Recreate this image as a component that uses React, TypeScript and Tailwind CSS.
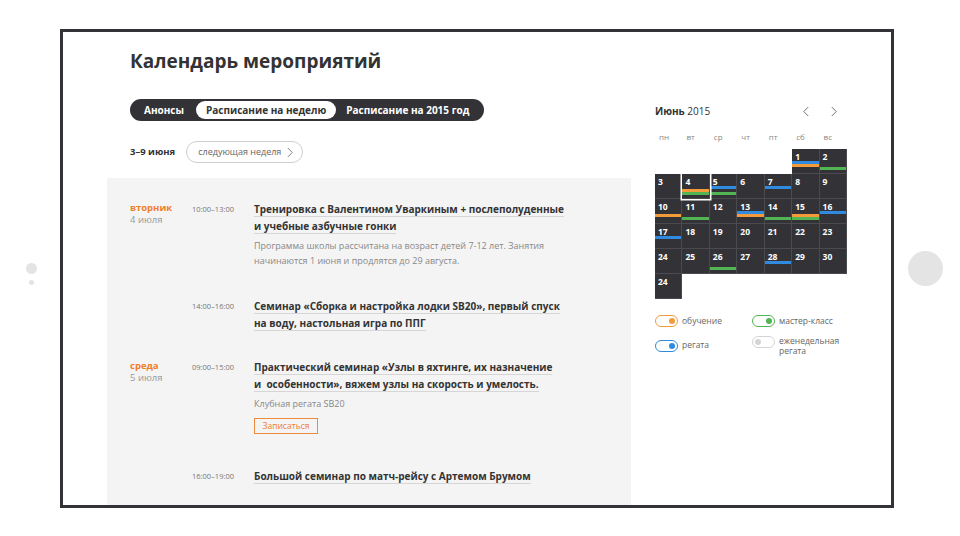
import React from "react";

type Bar = "b" | "o" | "g";
const BARS: Record<number, Bar[]> = {
  1: ["b", "o"],
  2: ["g"],
  4: ["o", "g"],
  5: ["b", "g"],
  7: ["b"],
  10: ["o"],
  11: ["g"],
  13: ["b", "o"],
  14: ["g"],
  15: ["o", "g"],
  16: ["b"],
  17: ["b"],
  26: ["g"],
  28: ["b"],
};

const cells: (number | null)[] = [
  null, null, null, null, null, 1, 2,
  3, 4, 5, 6, 7, 8, 9,
  10, 11, 12, 13, 14, 15, 16,
  17, 18, 19, 20, 21, 22, 23,
  24, 25, 26, 27, 28, 29, 30,
  -24,
];

function Cell({ n }: { n: number | null }) {
  if (n === null) return <div className="h-[25px]" />;
  const num = Math.abs(n);
  const bars = n > 0 ? BARS[num] || [] : [];
  const today = n === 4;
  return (
    <div
      className={
        "h-[25px] flex flex-col bg-[#333337] border-r border-b border-[#4b4b4f] " +
        (today ? "relative z-10 shadow-[0_0_0_1.5px_#ffffff]" : "")
      }
    >
      <span className="pl-[3px] pt-[3px] text-[8.5px] leading-[9px] font-bold text-white">{num}</span>
      <div className="mt-auto mb-[3px] flex flex-col">
        <div className={"h-[3px] " + (bars.includes("b") ? "bg-[#2f8be0]" : "")} />
        <div className={"h-[3px] " + (bars.includes("o") ? "bg-[#f39a3a]" : "")} />
        <div className={"h-[3px] " + (bars.includes("g") ? "bg-[#53b453]" : "")} />
      </div>
    </div>
  );
}

function Toggle({ border, dot, on }: { border: string; dot: string; on: boolean }) {
  return (
    <div
      className={
        "w-[23px] h-[12px] rounded-full border-[1.5px] flex items-center px-[2px] shrink-0 " +
        (on ? "justify-end " : "justify-start ") +
        border
      }
    >
      <div className={"w-[6px] h-[6px] rounded-full " + dot} />
    </div>
  );
}

function Title({ children }: { children: React.ReactNode }) {
  return (
    <div className="text-[10px] leading-[17px] font-bold text-[#333333]">
      <span className="border-b border-[#d6d6d6]">{children}</span>
    </div>
  );
}

function Chevron({ dir, cls }: { dir: "l" | "r"; cls: string }) {
  return (
    <svg viewBox="0 0 8 14" className={cls} fill="none" stroke="currentColor" strokeWidth="1.1">
      {dir === "l" ? <polyline points="7,1 1,7 7,13" /> : <polyline points="1,1 7,7 1,13" />}
    </svg>
  );
}

function Day({ name, date }: { name: string; date: string }) {
  return (
    <div className="w-[62px] pt-[1px]">
      <div className="text-[9.5px] leading-[12px] font-bold text-[#f07e2c]">{name}</div>
      <div className="text-[9.5px] leading-[12px] text-[#999999]">{date}</div>
    </div>
  );
}

export default function App() {
  const font = "font-['Open_Sans','Noto_Sans',sans-serif]";
  return (
    <div className={"relative w-[960px] h-[536px] bg-white flex " + font}>
      {/* side slider dots */}
      <div className="absolute left-[25.5px] top-[262.5px] w-[11px] h-[11px] rounded-full bg-[#e4e4e4]" />
      <div className="absolute left-[28.5px] top-[279.5px] w-[5px] h-[5px] rounded-full bg-[#e4e4e4]" />
      <div className="absolute left-[907.5px] top-[250.5px] w-[35px] h-[35px] rounded-full bg-[#e4e4e4]" />

      <div className="ml-[60px] mt-[29px] w-[834px] h-[479px] border-[3px] border-[#333337] flex overflow-hidden">
        {/* left column */}
        <div className="ml-[44px] w-[524px] flex flex-col">
          <div className="pl-[23px] pt-[16px]">
            <h1 className="text-[19px] leading-[26px] font-bold text-[#333333]">Календарь мероприятий</h1>
            <div className="mt-[25px] inline-flex items-center h-[22px] p-[2px] rounded-full bg-[#333337] text-[10px] font-bold">
              <span className="pl-[12px] pr-[12px] text-white">Анонсы</span>
              <span className="h-[18px] flex items-center px-[10px] rounded-full bg-white text-[#333333]">
                Расписание на неделю
              </span>
              <span className="pl-[10px] pr-[13px] text-white">Расписание на 2015 год</span>
            </div>
            <div className="mt-[20px] flex items-center h-[22px]">
              <span className="text-[9.5px] font-bold text-[#333333]">3–9 июня</span>
              <div className="ml-[11px] h-[22px] w-[117px] rounded-full border border-[#cfcfcf] flex items-center pl-[11px] text-[9px] text-[#666666]">
                следующая неделя
                <Chevron dir="r" cls="ml-[6px] w-[6px] h-[11px] text-[#666666]" />
              </div>
            </div>
          </div>

          <div className="mt-[15px] flex-1 bg-[#f4f4f4] pl-[23px] pt-[23px]">
            {/* event 1 */}
            <div className="flex">
              <Day name="вторник" date="4 июля" />
              <div className="w-[62px] text-[7.5px] leading-[17px] text-[#777777]">10:00–13:00</div>
              <div className="w-[340px]">
                <Title>
                  Тренировка с Валентином Уваркиным + послеполуденные
                  <br />и учебные азбучные гонки
                </Title>
                <div className="mt-[3px] text-[9px] leading-[15px] text-[#888888]">
                  Программа школы рассчитана на возраст детей 7-12 лет. Занятия
                  <br />
                  начинаются 1 июня и продлятся до 29 августа.
                </div>
              </div>
            </div>
            {/* event 2 */}
            <div className="flex mt-[30px]">
              <div className="w-[62px]" />
              <div className="w-[62px] text-[7.5px] leading-[17px] text-[#777777]">14:00–16:00</div>
              <div className="w-[340px]">
                <Title>
                  Семинар «Сборка и настройка лодки SB20», первый спуск
                  <br />
                  на воду, настольная игра по ППГ
                </Title>
              </div>
            </div>
            {/* event 3 */}
            <div className="flex mt-[27px]">
              <Day name="среда" date="5 июля" />
              <div className="w-[62px] text-[7.5px] leading-[17px] text-[#777777]">09:00–15:00</div>
              <div className="w-[340px]">
                <Title>
                  Практический семинар «Узлы в яхтинге, их назначение
                  <br />и&nbsp; особенности», вяжем узлы на скорость и умелость.
                </Title>
                <div className="mt-[3px] text-[9px] leading-[15px] text-[#888888]">Клубная регата SB20</div>
                <div className="mt-[7px] w-[64px] h-[16px] border border-[#f08a3c] flex items-center justify-center text-[8.5px] text-[#f07e2c]">
                  Записаться
                </div>
              </div>
            </div>
            {/* event 4 */}
            <div className="flex mt-[34px]">
              <div className="w-[62px]" />
              <div className="w-[62px] text-[7.5px] leading-[17px] text-[#777777]">16:00–19:00</div>
              <div className="w-[340px]">
                <Title>Большой семинар по матч-рейсу с Артемом Брумом</Title>
              </div>
            </div>
          </div>
        </div>

        {/* right column: calendar */}
        <div className="ml-[24px] w-[192px] pt-[71px] flex flex-col">
          <div className="h-[16px] flex items-center text-[10px] text-[#333333]">
            <span>
              <b className="font-bold">Июнь</b> 2015
            </span>
            <Chevron dir="l" cls="ml-auto w-[6px] h-[11px] text-[#555555]" />
            <Chevron dir="r" cls="ml-[22px] mr-[10px] w-[6px] h-[11px] text-[#555555]" />
          </div>
          <div className="mt-[12px] grid grid-cols-7 h-[12px] items-center text-[8px] text-[#888888]">
            {["пн", "вт", "ср", "чт", "пт", "сб", "вс"].map((d) => (
              <span key={d} className="pl-[4px]">
                {d}
              </span>
            ))}
          </div>
          <div className="mt-[6px] grid grid-cols-7">
            {cells.map((n, i) => (
              <Cell key={i} n={n} />
            ))}
          </div>
          <div className="mt-[16px] grid grid-cols-[97px_1fr] gap-y-[8px] text-[8.5px] text-[#666666]">
            <div className="flex items-center gap-[4px]">
              <Toggle border="border-[#f39a3a]" dot="bg-[#f39a3a]" on />
              <span>обучение</span>
            </div>
            <div className="flex items-center gap-[4px]">
              <Toggle border="border-[#53b453]" dot="bg-[#53b453]" on />
              <span>мастер-класс</span>
            </div>
            <div className="flex items-center gap-[4px]">
              <Toggle border="border-[#2f8be0]" dot="bg-[#2f8be0]" on />
              <span>регата</span>
            </div>
            <div className="flex items-start gap-[4px]">
              <Toggle border="border-[#d4d4d4]" dot="bg-[#d4d4d4]" on={false} />
              <span className="leading-[10px]">
                еженедельная
                <br />
                регата
              </span>
            </div>
          </div>
        </div>
      </div>
    </div>
  );
}
